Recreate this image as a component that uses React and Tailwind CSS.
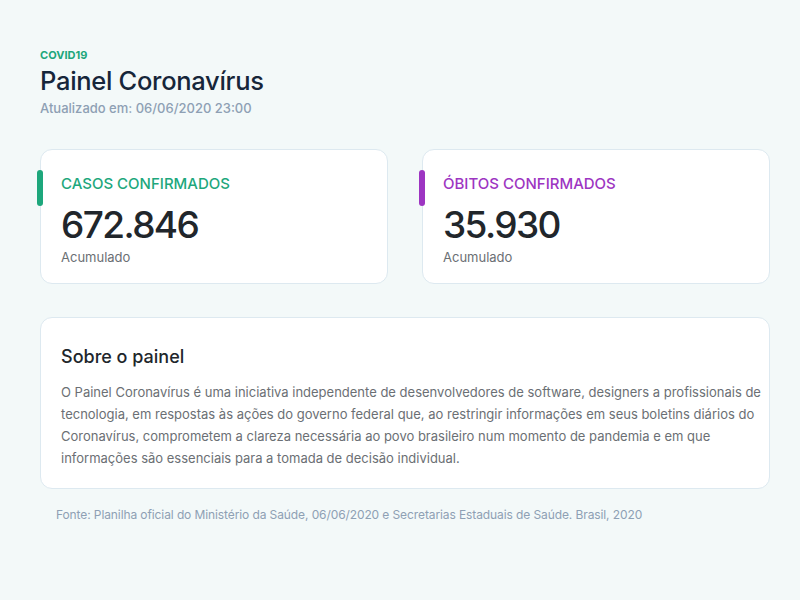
export default function App() {
  return (
    <div className="min-h-[600px] w-[800px] bg-[#f3f9f9] pl-10 pr-[30px] pt-[47px] font-['Inter',sans-serif]">
      <div className="mb-[2px] text-[11px] font-bold leading-4 text-[#1da77c]">COVID19</div>
      <h1 className="text-[25.5px] font-medium leading-8 tracking-[-0.3px] text-[#16263a]">
        Painel Coronavírus
      </h1>
      <div className="mt-px text-[13px] font-medium leading-5 text-[#8ea0b4]">Atualizado em: 06/06/2020 23:00</div>

      <div className="mt-[31px] flex gap-[34px]">
        <StatCard color="text-[#1da77c]" bar="bg-[#1da77c]" title="CASOS CONFIRMADOS" value="672.846" />
        <StatCard color="text-[#9d35c2]" bar="bg-[#9d35c2]" title="ÓBITOS CONFIRMADOS" value="35.930" />
      </div>

      <div className="mt-[33px] rounded-xl border border-[#dde9f0] bg-white pl-5 pr-2 pt-[27px] pb-[19px]">
        <h2 className="text-[18px] font-medium leading-6 text-[#21262b]">Sobre o painel</h2>
        <p className="mt-[12px] text-[13px] leading-[22px] text-[#6b6f74]">
          O Painel Coronavírus é uma iniciativa independente de desenvolvedores de software, designers a profissionais de
          tecnologia, em respostas às ações do governo federal que, ao restringir informações em seus boletins diários do
          Coronavírus, comprometem a clareza necessária ao povo brasileiro num momento de pandemia e em que
          informações são essenciais para a tomada de decisão individual.
        </p>
      </div>

      <div className="mt-[16px] pl-4 text-[12px] leading-5 tracking-[-0.1px] text-[#8ea0b4]">
        Fonte: Planilha oficial do Ministério da Saúde, 06/06/2020 e Secretarias Estaduais de Saúde. Brasil, 2020
      </div>
    </div>
  );
}

function StatCard({ color, bar, title, value }) {
  return (
    <div className="relative h-[135px] flex-1 rounded-xl border border-[#dde9f0] bg-white pl-5 pt-[24px]">
      <div className={`absolute left-[-4px] top-5 h-9 w-[6px] rounded-full ${bar}`} />
      <div className={`text-[15px] font-medium leading-5 ${color}`}>{title}</div>
      <div className="mt-[11px] text-[37px] font-medium leading-[40px] tracking-[-1.6px] text-[#21262b]">{value}</div>
      <div className="mt-[4px] text-[13px] leading-4 text-[#6b6f74]">Acumulado</div>
    </div>
  );
}
